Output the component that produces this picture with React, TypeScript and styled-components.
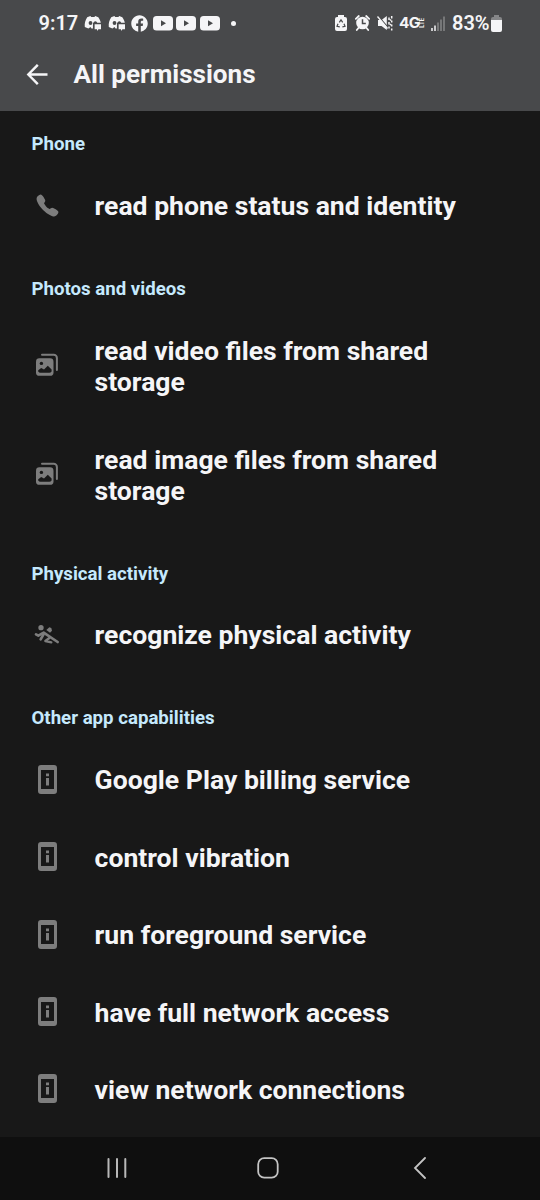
import React from "react";
import styled, { createGlobalStyle } from "styled-components";
import { FaFacebook } from "react-icons/fa";
import { IoCall } from "react-icons/io5";

const GlobalStyle = createGlobalStyle`
  * { box-sizing: border-box; }
  body { margin: 0; background: #181818; }
`;

const Screen = styled.div`
  width: 540px;
  height: 1200px;
  display: flex;
  flex-direction: column;
  overflow: hidden;
  background: #181818;
  color: #f5f5f7;
  font-family: Roboto, "Liberation Sans", sans-serif;
`;

const Header = styled.header`
  height: 111px;
  flex: none;
  background: #48494b;
`;

const StatusBar = styled.div`
  height: 46px;
  padding: 0 38px 0 38.5px;
  display: flex;
  align-items: center;
  justify-content: space-between;
`;

const StatusGroup = styled.div`
  display: flex;
  align-items: center;
`;

const StatusText = styled.span<{ $width: number }>`
  width: ${(p) => p.$width}px;
  font-size: 20px;
  line-height: 46px;
  font-weight: 600;
  white-space: nowrap;
`;

const Glyph = styled.span<{ $width: number; $gap: number }>`
  display: flex;
  flex: none;
  width: ${(p) => p.$width}px;
  margin-left: ${(p) => p.$gap}px;
  svg { display: block; flex: none; }
`;

const Dot = styled.span`
  width: 5px;
  height: 5px;
  margin-left: 11px;
  border-radius: 50%;
  background: #f5f5f7;
`;

const Network = styled.span`
  width: 27px;
  margin-left: 6px;
  display: flex;
  align-items: center;
`;

const NetworkName = styled.span`
  width: 20.5px;
  font: 700 14.5px/16px Inter, sans-serif;
  letter-spacing: -0.5px;
  transform: scaleX(1.06);
  transform-origin: left;
`;

const NetworkSuffix = styled.span`
  font: 700 5.5px/6px Inter, sans-serif;
  writing-mode: vertical-rl;
  transform: rotate(180deg);
`;

const TitleBar = styled.div`
  height: 57px;
  padding-left: 26px;
  display: flex;
  align-items: center;
`;

const Title = styled.h1`
  margin: -2px 0 0 25.5px;
  font-size: 26.1px;
  line-height: 56px;
  font-weight: 700;
`;

const Content = styled.main`
  flex: 1;
  min-height: 0;
`;

const SectionTitle = styled.h2<{ $first?: boolean }>`
  height: ${(p) => (p.$first ? 56.5 : 67.3)}px;
  margin: 0;
  padding: ${(p) => (p.$first ? 22 : 33.3)}px 0 0 31.5px;
  font-size: 18.65px;
  line-height: 22px;
  font-weight: 700;
  color: #c5e9fd;
`;

const Row = styled.div`
  display: flex;
  align-items: center;
  padding: 22.8px 60px 23.7px 34px;
`;

const RowIcon = styled.span`
  width: 26px;
  height: 30px;
  flex: none;
  margin: -1.2px 34.6px 0 0;
  display: flex;
  align-items: center;
  justify-content: center;
  color: #7d7d7d;
`;

const RowText = styled.span`
  font-size: 26.55px;
  line-height: 31px;
  font-weight: 700;
`;

const NavBar = styled.nav`
  height: 63px;
  flex: none;
  padding: 0 113.5px 1px 106px;
  display: grid;
  grid-template-columns: 151px 1fr auto;
  align-items: center;
  background: #0f0f0f;
`;

const DiscordNotice = ({ gap }: { gap: number }) => (
  <Glyph $width={18} $gap={gap}>
    <svg width="18" height="16" viewBox="0 0 18 16">
      <path d="M3.2 2.2L6.4 1l.8 1h3.200l.8-1 3.100 1.200c1.400 2 2.300 3.800 2.500 5.800H9v5.600H7.500L6.500 12l-2.100 1.600L.8 12C.4 8.300 1.400 5 3.200 2.200z" fill="#f5f5f7" />
      <circle cx="6.5" cy="8" r="1.9" fill="#48494b" />
      <path d="M9.5 9c-.2-1.900.7-2.800 1.900-2.800S13.300 7.100 13.100 9z" fill="#48494b" />
      <path d="M10.500 9.300H17v5h-2.500L13 16v-1.700h-2.500z" fill="#f5f5f7" />
      <path d="M9.600 14.500V8.400H17" fill="none" stroke="#48494b" strokeWidth="1.3" />
    </svg>
  </Glyph>
);

const VideoNotice = ({ gap }: { gap: number }) => (
  <Glyph $width={20} $gap={gap}>
    <svg width="20" height="15" viewBox="0 0 20 15">
      <rect width="20" height="14.6" rx="3.6" fill="#f5f5f7" />
      <path d="M8 4.3v6l5-3z" fill="#48494b" />
    </svg>
  </Glyph>
);

const PhotoIcon = () => (
  <svg width="26" height="26" viewBox="0 0 26 26">
    <path d="M8 2.800h11.700a3.200 3.200 0 0 1 3.200 3.200V18" fill="none" stroke="currentColor" strokeWidth="2" strokeLinecap="round" />
    <rect x="2" y="6.3" width="17.5" height="17.5" rx="3.4" fill="currentColor" />
    <circle cx="7.4" cy="11.4" r="1.7" fill="#181818" />
    <path d="M4.200 19.500v-1.200l3-2.400 2.800 1.600 3.800-3.700 3.800 3.700v2q-1 1.200-2.300 1.200H6.500q-1.500 0-2.300-1.200z" fill="#181818" />
  </svg>
);

const ActivityIcon = () => (
  <svg width="26" height="24" viewBox="0 0 78 72" fill="none" stroke="currentColor" strokeLinecap="round" strokeLinejoin="round">
    <circle cx="21" cy="17" r="8" fill="currentColor" stroke="none" />
    <path d="M37 24l9-8 6 2 2 8-6 6z" fill="currentColor" stroke="none" />
    <path d="M6 37l7 4 16-9 42 28" strokeWidth="8" />
    <path d="M29 36l-9 16" strokeWidth="8" />
    <path d="M46 48l-12 9 18 4" strokeWidth="7" />
  </svg>
);

const DeviceIcon = () => (
  <svg width="19" height="29" viewBox="0 0 19 29">
    <path fillRule="evenodd" d="M3 0h13a3 3 0 0 1 3 3v23a3 3 0 0 1-3 3H3a3 3 0 0 1-3-3V3a3 3 0 0 1 3-3zM3 5v19h13V5z" fill="currentColor" />
    <path d="M8 8.500h3v2.700H8zM8 13h3v7.500H8z" fill="currentColor" />
  </svg>
);

const icons = {
  phone: <IoCall size={25} />,
  photo: <PhotoIcon />,
  activity: <ActivityIcon />,
  device: <DeviceIcon />,
};

const sections: { title: string; icon: keyof typeof icons; items: string[] }[] = [
  { title: "Phone", icon: "phone", items: ["read phone status and identity"] },
  {
    title: "Photos and videos",
    icon: "photo",
    items: ["read video files from shared storage", "read image files from shared storage"],
  },
  { title: "Physical activity", icon: "activity", items: ["recognize physical activity"] },
  {
    title: "Other app capabilities",
    icon: "device",
    items: [
      "Google Play billing service",
      "control vibration",
      "run foreground service",
      "have full network access",
      "view network connections",
    ],
  },
];

export default function App() {
  return (
    <Screen>
      <GlobalStyle />
      <Header>
        <StatusBar>
          <StatusGroup>
            <StatusText $width={38}>9:17</StatusText>
            <DiscordNotice gap={7.5} />
            <DiscordNotice gap={5.5} />
            <Glyph $width={17} $gap={5}>
              <FaFacebook size={17} />
            </Glyph>
            <VideoNotice gap={5} />
            <VideoNotice gap={3.5} />
            <VideoNotice gap={3.5} />
            <Dot />
          </StatusGroup>
          <StatusGroup>
            <Glyph $width={12} $gap={0}>
              <svg width="12" height="16" viewBox="0 0 12 16">
                <path d="M3 2V0h6v2h1a2 2 0 0 1 2 2v10a2 2 0 0 1-2 2H2a2 2 0 0 1-2-2V4a2 2 0 0 1 2-2z" fill="#f5f5f7" />
                <path d="M4.300 7.300L6 4.800l1.700 2.500M9 8.800l1 2.500-2.600.5M4.800 11.900l-2.800-.5 1-2.600" fill="none" stroke="#48494b" strokeWidth="1.2" />
              </svg>
            </Glyph>
            <Glyph $width={15} $gap={8}>
              <svg width="15" height="16" viewBox="0 0 15 16">
                <circle cx="7.5" cy="8" r="6.3" fill="#f5f5f7" />
                <path d="M.8 3.800L3.800 1M14.200 3.800l-3-2.800M3.400 13L1.800 15M11.600 13l1.600 2" stroke="#f5f5f7" strokeWidth="1.8" strokeLinecap="round" />
                <path d="M7.500 4.300v4.200h3.300" fill="none" stroke="#48494b" strokeWidth="1.5" />
              </svg>
            </Glyph>
            <Glyph $width={16} $gap={7}>
              <svg width="16" height="16" viewBox="0 0 16 16">
                <path d="M1 5h3.500L9.800 1v14l-5.300-4H1z" fill="#f5f5f7" />
                <path d="M1.200 .8l10 11.800" stroke="#48494b" strokeWidth="1.2" />
                <path d="M.5 1.500l10 12" stroke="#f5f5f7" strokeWidth="1.3" />
                <path d="M12 2.500v2.500M12 7v2.500M12 11.500v2M14.700 1v2.500M14.700 5.500v2M14.700 9.500v2M14.700 13.500v2M13 4.500l1 1M13 9l1 1" fill="none" stroke="#f5f5f7" strokeWidth="1.5" />
              </svg>
            </Glyph>
            <Network>
              <NetworkName>4G</NetworkName>
              <NetworkSuffix>LTE</NetworkSuffix>
            </Network>
            <Glyph $width={14} $gap={5}>
              <svg width="14" height="15" viewBox="0 0 14 15">
                <path d="M1 12v3M4 9.500V15" stroke="#f5f5f7" strokeWidth="1.5" />
                <path d="M7 6.500V15M10 3.500V15M13 .5V15" stroke="#858688" strokeWidth="1.5" />
              </svg>
            </Glyph>
            <Glyph $width={0} $gap={7.5} />
            <StatusText $width={38}>83%</StatusText>
            <Glyph $width={11} $gap={1}>
              <svg width="11" height="17" viewBox="0 0 11 17">
                <path d="M3 2V0h5v2h1a2 2 0 0 1 2 2v3H0V4a2 2 0 0 1 2-2z" fill="#858688" />
                <path d="M0 5h11v10a2 2 0 0 1-2 2H2a2 2 0 0 1-2-2z" fill="#f5f5f7" />
              </svg>
            </Glyph>
          </StatusGroup>
        </StatusBar>
        <TitleBar>
          <svg width="22" height="22" viewBox="0 0 22 22" fill="none" stroke="#f5f5f7" strokeWidth="2.4">
            <path d="M21.500 10.500H2.500M11.800.8L2.300 10.500l9.500 9.700" />
          </svg>
          <Title>All permissions</Title>
        </TitleBar>
      </Header>
      <Content>
        {sections.map((section, i) => (
          <section key={section.title}>
            <SectionTitle $first={i === 0}>{section.title}</SectionTitle>
            {section.items.map((item) => (
              <Row key={item}>
                <RowIcon>{icons[section.icon]}</RowIcon>
                <RowText>{item}</RowText>
              </Row>
            ))}
          </section>
        ))}
      </Content>
      <NavBar>
        <svg width="22" height="22" viewBox="0 0 22 22" stroke="#b8b8b8" strokeWidth="2" strokeLinecap="round">
          <path d="M2.500 2v18M11 2v18M19.300 2v18" />
        </svg>
        <svg width="22" height="22" viewBox="0 0 22 22" fill="none" stroke="#c4c4c4" strokeWidth="1.8">
          <rect x="1.2" y="1.2" width="19.5" height="19.5" rx="6" />
        </svg>
        <svg width="14" height="22" viewBox="0 0 14 22" fill="none" stroke="#c4c4c4" strokeWidth="1.8" strokeLinecap="round">
          <path d="M12 1L2 11l10 10" />
        </svg>
      </NavBar>
    </Screen>
  );
}
